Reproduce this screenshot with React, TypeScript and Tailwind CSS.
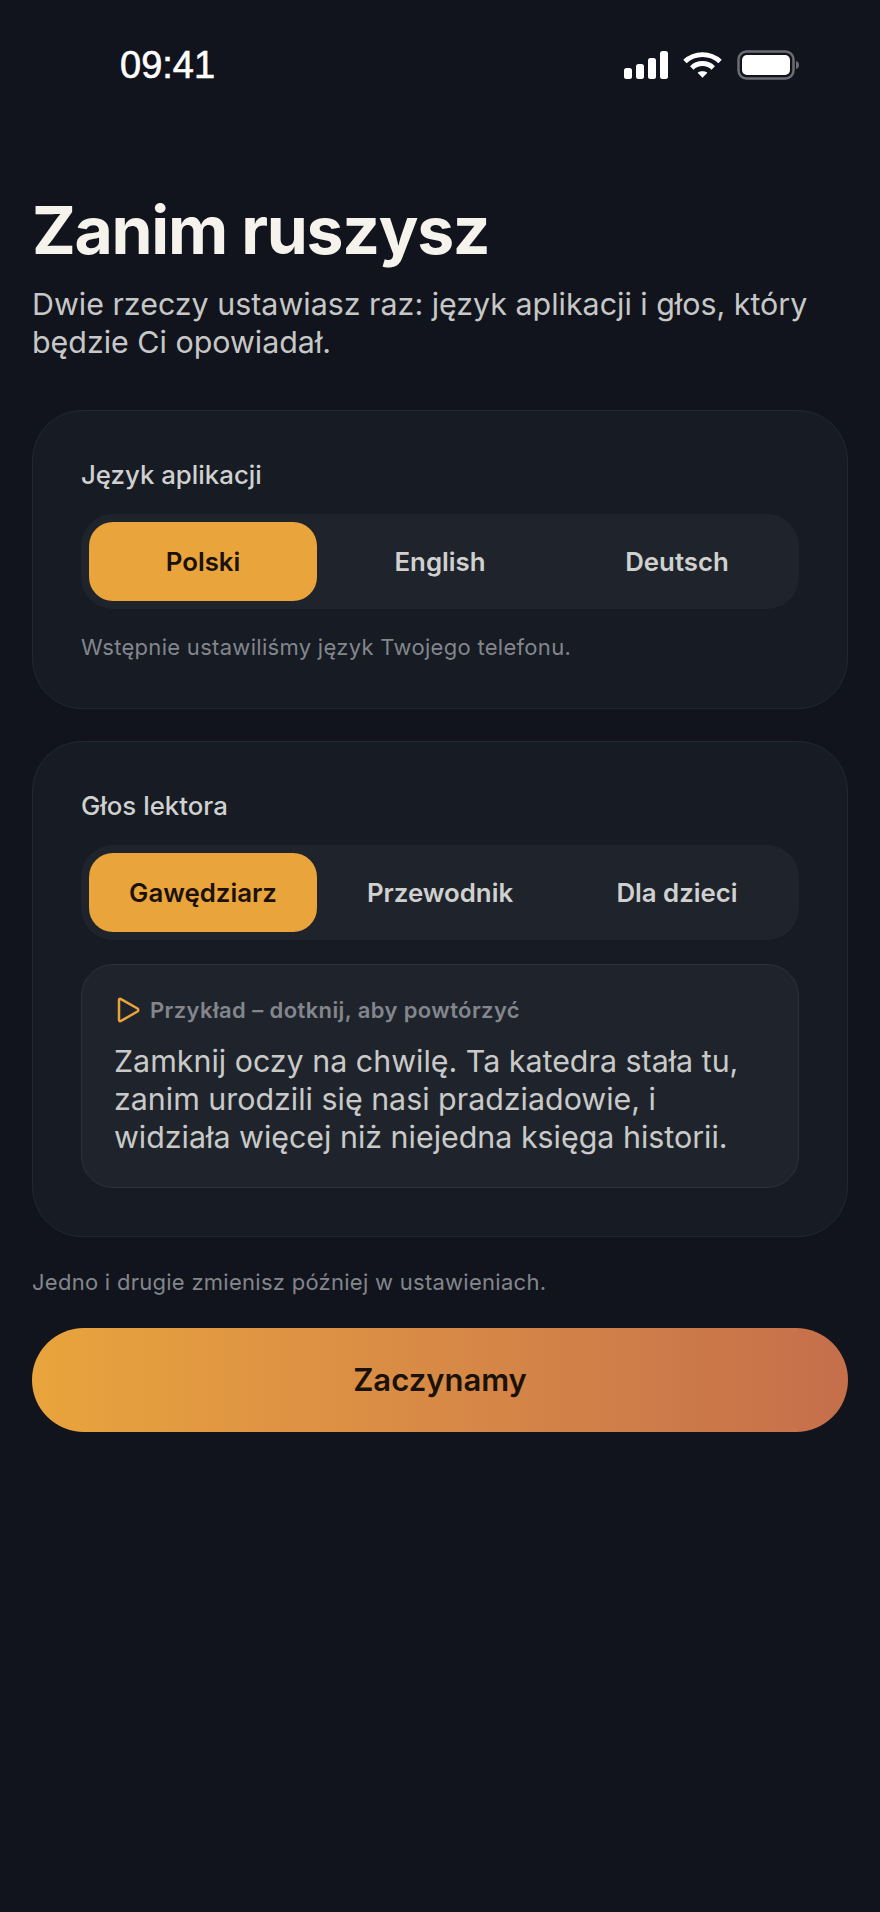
function StatusBar() {
  return (
    <div className="flex items-center justify-between pt-[44px] pl-[120px] pr-[81px]">
      <span className="font-['Liberation_Sans',sans-serif] text-[38px] leading-[42px] font-medium text-white [-webkit-text-stroke:0.6px_white]">09:41</span>
      <div className="flex items-center gap-[15px]">
        <svg width="44" height="28" viewBox="0 0 44 28" fill="white">
          <rect x="0" y="17" width="8" height="11" rx="2.5" />
          <rect x="12" y="13" width="8" height="15" rx="2.5" />
          <rect x="24" y="7" width="8" height="21" rx="2.5" />
          <rect x="36" y="0" width="8" height="28" rx="2.5" />
        </svg>
        <svg width="39" height="28" viewBox="0 0 40 28" fill="none" stroke="white" strokeWidth="5">
          <path d="M2 10.5 C12 1 28 1 38 10.5" />
          <path d="M9 17 C15 11 25 11 31 17" />
          <path d="M15 22 L20 27 L25 22 C22 20 18 20 15 22 Z" fill="white" stroke="none" />
        </svg>
        <svg width="62" height="30" viewBox="0 0 62 30" fill="none">
          <rect x="1.5" y="1.5" width="55" height="27" rx="8" stroke="#6b6d73" strokeWidth="2.5" />
          <rect x="5" y="5" width="48" height="20" rx="5" fill="white" />
          <path d="M59 11 C61 11.5 62 13 62 15 C62 17 61 18.5 59 19 Z" fill="#6b6d73" />
        </svg>
      </div>
    </div>
  )
}

function Segment({ options }: { options: string[] }) {
  return (
    <div className="grid h-[95px] grid-cols-3 gap-[9px] rounded-[32px] bg-[#1f242c] p-2">
      {options.map((o, i) => (
        <div
          key={o}
          className={
            i === 0
              ? "flex items-center justify-center rounded-[24px] bg-[#e9a43c] pt-[1px] text-[25.8px] font-semibold text-[#1a1208]"
              : "flex items-center justify-center pt-[1px] text-[25.8px] font-semibold text-[#d0d1cf]"
          }
        >
          {o}
        </div>
      ))}
    </div>
  )
}

export default function App() {
  return (
    <div className="min-h-[1912px] bg-[#11141c] font-['Inter',sans-serif]">
      <StatusBar />
      <div className="px-8 pt-[108px]">
        <h1 className="text-[66px] leading-[72px] font-bold tracking-[-1.3px] text-[#f5f3ec]">Zanim ruszysz</h1>
        <p className="mt-[19px] text-[30.4px] leading-[38px] text-[#c6c7c6]">
          Dwie rzeczy ustawiasz raz: język aplikacji i głos, który będzie Ci opowiadał.
        </p>

        <section className="mt-[49px] rounded-[50px] border border-[#222832] bg-[#161b24] px-[48px] pt-[48px] pb-[47px]">
          <h2 className="mb-[23px] text-[25.8px] leading-[32px] font-[450] text-[#d0d1cf]">Język aplikacji</h2>
          <Segment options={["Polski", "English", "Deutsch"]} />
          <p className="mt-[24px] text-[22px] leading-[28px] tracking-[0.3px] text-[#83868c]">
            Wstępnie ustawiliśmy język Twojego telefonu.
          </p>
        </section>

        <section className="mt-[32px] rounded-[50px] border border-[#222832] bg-[#161b24] px-[48px] pt-[48px] pb-[48px]">
          <h2 className="mb-[23px] text-[25.8px] leading-[32px] font-[450] text-[#d0d1cf]">Głos lektora</h2>
          <Segment options={["Gawędziarz", "Przewodnik", "Dla dzieci"]} />
          <div className="mt-[24px] rounded-[32px] border border-[#2c323c] bg-[#1f242c] px-[32px] pt-[31px] pb-[31px]">
            <div className="flex items-center gap-[10px]">
              <svg width="24" height="26" viewBox="0 0 24 26" fill="none" stroke="#e9a43c" strokeWidth="2.5" strokeLinejoin="round" className="ml-[2px]">
                <path d="M3 3 C3 2 4 1.6 5 2.1 L21.5 11.5 C22.5 12.2 22.5 13.8 21.5 14.5 L5 23.9 C4 24.4 3 24 3 23 Z" />
              </svg>
              <span className="text-[22px] leading-[28px] font-semibold tracking-[0.4px] text-[#83868c]">
                Przykład – dotknij, aby powtórzyć
              </span>
            </div>
            <p className="mt-[18px] text-[30.4px] leading-[38px] text-[#c9cac8]">
              Zamknij oczy na chwilę. Ta katedra stała tu, zanim urodzili się nasi pradziadowie, i widziała więcej niż niejedna księga historii.
            </p>
          </div>
        </section>

        <p className="mt-[31px] text-[22px] leading-[28px] tracking-[0.27px] text-[#83868c]">
          Jedno i drugie zmienisz później w ustawieniach.
        </p>
        <button className="mt-[32px] flex h-[104px] w-full items-center justify-center rounded-[52px] bg-gradient-to-r from-[#e9a43c] to-[#c56f4b] text-[31px] font-semibold text-[#1a1208]">
          Zaczynamy
        </button>
      </div>
    </div>
  )
}
